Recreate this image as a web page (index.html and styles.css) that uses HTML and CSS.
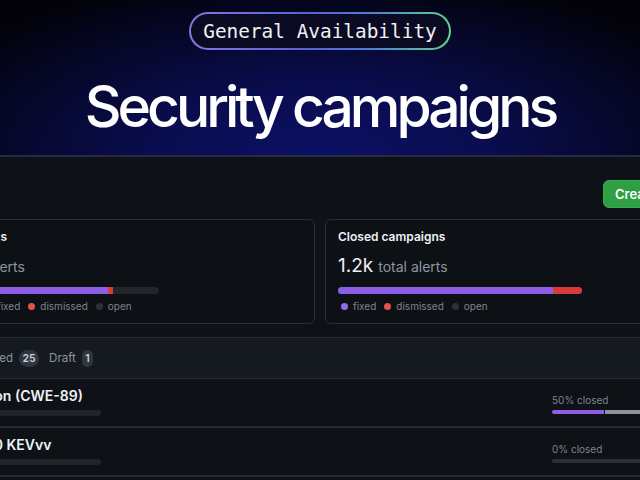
FILE: index.html
```html
<!DOCTYPE html>
<html>
<head>
<meta charset="utf-8">
<link rel="stylesheet" href="styles.css">
</head>
<body>
<header class="hero">
  <div class="pill"><span>General Availability</span></div>
  <h1 class="title">Security campaigns</h1>
</header>
<main class="panel">
  <div class="wrap">
    <div class="toolbar">
      <button class="btn-create">Create campaign</button>
    </div>
    <div class="cards">
      <section class="card card-open">
        <h2 class="card-title">Open campaigns</h2>
        <p class="stat"><span class="num">3.4k</span> <span class="unit">total alerts</span></p>
        <div class="bar">
          <span class="seg fixed" style="width:79%"></span>
          <span class="seg dismissed" style="width:2%"></span>
        </div>
        <ul class="legend legend-open">
          <li><i class="dot prog"></i>in progress</li>
          <li><i class="dot fixed"></i>fixed</li>
          <li><i class="dot dismissed"></i>dismissed</li>
          <li><i class="dot open"></i>open</li>
        </ul>
      </section>
      <section class="card">
        <h2 class="card-title">Closed campaigns</h2>
        <p class="stat"><span class="num">1.2k</span> <span class="unit">total alerts</span></p>
        <div class="bar">
          <span class="seg fixed" style="width:88%"></span>
          <span class="seg dismissed" style="width:12%"></span>
        </div>
        <ul class="legend">
          <li><i class="dot fixed"></i>fixed</li>
          <li><i class="dot dismissed"></i>dismissed</li>
          <li><i class="dot open"></i>open</li>
        </ul>
      </section>
    </div>
    <div class="list">
      <nav class="tabs">
        <span class="tab">Open <b class="count">3</b></span>
        <span class="tab">Closed <b class="count">25</b></span>
        <span class="tab">Draft <b class="count">1</b></span>
      </nav>
      <div class="row">
        <div class="row-main">
          <div class="row-title">SQL injection (CWE-89)</div>
          <div class="skeleton"></div>
        </div>
        <div class="row-side">
          <div class="pct">50% closed</div>
          <div class="mini"><span class="mini-fill" style="width:50%"></span><span class="mini-rest"></span></div>
        </div>
      </div>
      <div class="row">
        <div class="row-main">
          <div class="row-title">CISA Top 10 KEVvv</div>
          <div class="skeleton"></div>
        </div>
        <div class="row-side">
          <div class="pct">0% closed</div>
          <div class="mini empty"></div>
        </div>
      </div>
    </div>
  </div>
</main>
</body>
</html>
```

FILE: styles.css
```css
html, body {
  margin: 0;
  padding: 0;
  overflow: hidden;
  background: #0e1116;
  width: 640px;
  height: 480px;
}
body {
  font-family: Inter, "Noto Sans", sans-serif;
  color: #e6edf3;
}
.hero {
  height: 157px;
  border-bottom: 2px solid #272a44;
  background:
    radial-gradient(ellipse 70% 120% at 50% 100%, #0c1064 0%, #0a0d50 35%, #070936 60%, #04051a 85%, #020208 100%);
  display: flex;
  flex-direction: column;
  align-items: center;
  box-sizing: border-box;
  padding-top: 12px;
}
.pill {
  height: 38px;
  width: 262px;
  box-sizing: border-box;
  border: 2px solid transparent;
  border-radius: 20px;
  background:
    linear-gradient(#0a0b22, #0a0b22) padding-box,
    linear-gradient(90deg, #8478dc 0%, #5a5fd6 45%, #4f7fd0 70%, #5fd58a 100%) border-box;
  display: flex;
  align-items: center;
  justify-content: center;
}
.pill span {
  font-family: "DejaVu Sans Mono", "Liberation Mono", monospace;
  font-size: 19.4px;
  color: #f0f0f4;
}
.title {
  margin: 22px 0 0;
  font-size: 57px;
  font-weight: 500;
  letter-spacing: -0.07em;
  color: #ffffff;
  line-height: 70px;
}
.panel {
  background: #0e1116;
}
.wrap {
  margin-left: -98px;
  width: 836px;
}
.toolbar {
  display: flex;
  padding: 23px 0 0 701px;
  height: 28px;
}
.btn-create {
  height: 28px;
  padding: 0 12px 0 11px;
  border: 1px solid #3aa955;
  border-radius: 6px;
  background: #2ea043;
  color: #ffffff;
  font-family: Inter, sans-serif;
  font-weight: 600;
  font-size: 13px;
  white-space: nowrap;
}
.cards {
  display: grid;
  grid-template-columns: 1fr 1fr;
  gap: 10px;
  margin-top: 11px;
}
.card {
  height: 105px;
  box-sizing: border-box;
  border: 1px solid #2a2f37;
  border-radius: 6px;
  padding: 9px 12px 10px;
  background: #0d1015;
}
.card-open .card-title { margin-left: -6px; }
.card-open .stat { margin-left: -4px; }
.card-title {
  margin: 0;
  font-size: 12px;
  font-weight: 600;
  line-height: 16px;
  color: #eef1f5;
}
.stat {
  margin: 9px 0 0;
  line-height: 24px;
  display: flex;
  align-items: baseline;
  gap: 5px;
}
.num {
  font-size: 19px;
  color: #eef1f5;
}
.unit {
  font-size: 14px;
  color: #8d96a0;
}
.bar {
  margin-top: 8px;
  width: 244px;
  height: 7px;
  border-radius: 4px;
  display: flex;
  overflow: hidden;
  background: #21252c;
}
.seg { display: block; height: 100%; }
.seg.fixed { background: #8e5fe6; }
.seg.dismissed { background: #d73a3a; }
.legend {
  list-style: none;
  margin: 5px 0 0;
  padding: 0 0 0 3px;
  display: flex;
  gap: 8px;
  font-size: 10px;
  color: #7d8590;
  line-height: 14px;
}
.legend-open {
  margin-left: -6px;
}
.legend li {
  display: flex;
  align-items: center;
  gap: 5px;
}
.dot {
  width: 7px;
  height: 7px;
  border-radius: 50%;
  display: inline-block;
}
.dot.fixed { background: #8e6ee6; }
.dot.dismissed { background: #e5534b; }
.dot.open { background: #2d323a; }
.dot.prog { background: #3c7bd9; }
.list {
  margin-top: 13px;
}
.tabs {
  height: 42px;
  box-sizing: border-box;
  border-top: 1px solid #262b33;
  border-bottom: 1px solid #262b33;
  background: #151920;
  display: flex;
  align-items: center;
  gap: 10px;
  padding-left: 14px;
  font-size: 11.5px;
  color: #8d96a0;
}
.tab {
  display: flex;
  align-items: center;
  gap: 6px;
}
.count {
  display: inline-block;
  padding: 0 3.5px;
  height: 17px;
  line-height: 17px;
  border-radius: 9px;
  background: #30363e;
  color: #c9d1d9;
  font-size: 10.5px;
  font-weight: 600;
  text-align: center;
}
.row {
  height: 49px;
  box-sizing: border-box;
  border-bottom: 2px solid #262b33;
  display: grid;
  grid-template-columns: 1fr 170px;
  padding: 9px 16px 0 20px;
  background: #0e1116;
}
.row-title {
  font-size: 14px;
  font-weight: 600;
  line-height: 16px;
  color: #eef1f5;
}
.skeleton {
  margin-top: 6px;
  width: 179px;
  height: 6px;
  border-radius: 3px;
  background: #20242b;
}
.row-side {
  padding-top: 5px;
}
.pct {
  font-size: 10px;
  line-height: 14px;
  color: #7d8590;
}
.mini {
  margin-top: 3px;
  width: 104px;
  height: 4px;
  display: flex;
  border-radius: 2px;
  overflow: hidden;
}
.mini-fill { display: block; height: 100%; background: #8e5fe6; }
.mini-rest { display: block; flex: 1; height: 100%; background: #8d939b; margin-left: 1px; }
.mini.empty { background: #2a2f36; }
```
